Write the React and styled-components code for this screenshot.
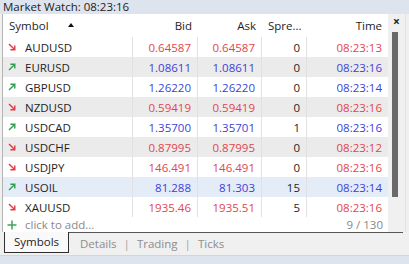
import React from 'react';
import styled, { createGlobalStyle } from 'styled-components';

const GlobalStyle = createGlobalStyle`
    html, body {
        margin: 0;
        padding: 0;
        background: #f0f0f0;
    }
    body {
        font-family: "Open Sans", "Noto Sans", sans-serif;
        font-size: 11.5px;
        color: #1e1e1e;
    }
`;

const RED = '#e4454d';
const BLUE = '#3d3fd8';

const Window = styled.div`
    width: 409px;
    height: 264px;
    display: flex;
    flex-direction: column;
    background: #f0f0f0;
    overflow: hidden;
`;

const TitleBar = styled.div`
    height: 14px;
    line-height: 14px;
    padding-left: 3px;
    background: #dde4ed;
    color: #222;
    white-space: nowrap;
`;

const Main = styled.div`
    display: flex;
    height: 218px;
    padding-left: 2px;
`;

const Panel = styled.div`
    width: 385px;
    border-left: 1px solid #b4b4b4;
    background: #fff;
    display: flex;
    flex-direction: column;
`;

const Grid = styled.div`
    display: grid;
    grid-template-columns: 130px 65px 64px 45px 81px;
    height: ${p => p.$h}px;
    background: ${p => p.$bg || '#fff'};
`;

const Cell = styled.div`
    display: flex;
    align-items: center;
    justify-content: ${p => (p.$left ? 'flex-start' : 'flex-end')};
    padding: ${p => (p.$left ? '0 0 0 6px' : '0 6px 0 0')};
    border-right: ${p => (p.$lines ? '1px solid #e2e2e2' : 'none')};
    color: ${p => p.$color || '#1e1e1e'};
    white-space: nowrap;
    overflow: hidden;
    &:last-child {
        border-right: none;
    }
`;

const SymbolCell = styled(Cell)`
    padding-left: 5px;
    gap: 9px;
`;

const SortMark = styled.span`
    margin-left: 19px;
    width: 0;
    height: 0;
    border-left: 3px solid transparent;
    border-right: 3px solid transparent;
    border-bottom: 4px solid #111;
    margin-top: -2px;
`;

const AddRow = styled.div`
    height: 15px;
    display: flex;
    align-items: center;
    padding: 0 5px 0 4px;
    color: #8a8a8a;
    background: #fff;
`;

const AddText = styled.span`
    margin-left: 8px;
    flex: 1;
`;

const Count = styled.span`
    color: #888;
`;

const SideBar = styled.div`
    width: 17px;
    display: flex;
    flex-direction: column;
    background: #f0f0f0;
    border-right: 1px solid #e2e2e2;
`;

const Close = styled.div`
    height: 18px;
    line-height: 16px;
    font-size: 12px;
    font-weight: bold;
    color: #222;
    padding-left: 5px;
`;

const Thumb = styled.div`
    width: 6px;
    height: 165px;
    margin-left: 4px;
    background: #6a6a6a;
`;

const TabBar = styled.div`
    height: 23px;
    display: flex;
    align-items: flex-start;
    padding-left: 4px;
`;

const ActiveTab = styled.div`
    width: 63px;
    height: 20px;
    line-height: 19px;
    text-align: center;
    background: #f9f9f9;
    border: 1px solid #2e2e2e;
    border-top: none;
    color: #1e1e1e;
`;

const Tabs = styled.div`
    flex: 1;
    display: flex;
    align-items: center;
    height: 20px;
    margin-right: 6px;
    padding-left: 11px;
    border-top: 1px solid #555;
    color: #8d8d8d;
    gap: 7px;
`;

const Sep = styled.span`
    color: #a0a0a0;
`;

const StatusStrip = styled.div`
    flex: 1;
    background: #dde4ed;
    border-top: 1px solid #cfd6df;
`;

const Arrow = ({ up }) => (
    <svg width="8" height="8" viewBox="0 0 8 8" style={{ flex: 'none' }}>
        {up ? (
            <g stroke="#2fa052" strokeWidth="1.4" fill="none">
                <path d="M1 7 L6.6 1.4" />
                <path d="M2.4 1.2 H6.8 V5.6" />
            </g>
        ) : (
            <g stroke="#e23a44" strokeWidth="1.4" fill="none">
                <path d="M1 1 L6.6 6.6" />
                <path d="M6.8 2.4 V6.8 H2.4" />
            </g>
        )}
    </svg>
);

const quotes = [
    { s: 'AUDUSD', up: false, bid: '0.64587', ask: '0.64587', sp: 0, t: '08:23:13' },
    { s: 'EURUSD', up: true, bid: '1.08611', ask: '1.08611', sp: 0, t: '08:23:16' },
    { s: 'GBPUSD', up: true, bid: '1.26220', ask: '1.26220', sp: 0, t: '08:23:14' },
    { s: 'NZDUSD', up: false, bid: '0.59419', ask: '0.59419', sp: 0, t: '08:23:16' },
    { s: 'USDCAD', up: true, bid: '1.35700', ask: '1.35701', sp: 1, t: '08:23:16' },
    { s: 'USDCHF', up: false, bid: '0.87995', ask: '0.87995', sp: 0, t: '08:23:12' },
    { s: 'USDJPY', up: false, bid: '146.491', ask: '146.491', sp: 0, t: '08:23:16' },
    { s: 'USOIL', up: true, bid: '81.288', ask: '81.303', sp: 15, t: '08:23:14' },
    { s: 'XAUUSD', up: false, bid: '1935.46', ask: '1935.51', sp: 5, t: '08:23:16' },
];

const rowBg = (i, sym) => {
    if (sym === 'USOIL') return '#e4ecf8';
    return i % 2 === 1 ? '#ebebeb' : '#fff';
};

const tabs = ['Details', 'Trading', 'Ticks'];

const App = () => (
    <Window>
        <GlobalStyle />
        <TitleBar>Market Watch: 08:23:16</TitleBar>
        <Main>
            <Panel>
                <Grid $h={23}>
                    <Cell $left>
                        Symbol
                        <SortMark />
                    </Cell>
                    <Cell>Bid</Cell>
                    <Cell>Ask</Cell>
                    <Cell $left>Spre...</Cell>
                    <Cell>Time</Cell>
                </Grid>
                {quotes.map((q, i) => {
                    const c = q.up ? BLUE : RED;
                    return (
                        <Grid key={q.s} $h={20} $bg={rowBg(i, q.s)}>
                            <SymbolCell $left $lines>
                                <Arrow up={q.up} />
                                {q.s}
                            </SymbolCell>
                            <Cell $lines $color={c}>{q.bid}</Cell>
                            <Cell $lines $color={c}>{q.ask}</Cell>
                            <Cell $lines>{q.sp}</Cell>
                            <Cell $color={c}>{q.t}</Cell>
                        </Grid>
                    );
                })}
                <AddRow>
                    <svg width="10" height="10" viewBox="0 0 10 10">
                        <path d="M5 0.5 V9.5 M0.5 5 H9.5" stroke="#3aa856" strokeWidth="1.5" />
                    </svg>
                    <AddText>click to add...</AddText>
                    <Count>9 / 130</Count>
                </AddRow>
            </Panel>
            <SideBar>
                <Close>×</Close>
                <Thumb />
            </SideBar>
        </Main>
        <TabBar>
            <ActiveTab>Symbols</ActiveTab>
            <Tabs>
                {tabs.map((t, i) => (
                    <React.Fragment key={t}>
                        {i > 0 && <Sep>|</Sep>}
                        <span>{t}</span>
                    </React.Fragment>
                ))}
            </Tabs>
        </TabBar>
        <StatusStrip />
    </Window>
);

export default App;
